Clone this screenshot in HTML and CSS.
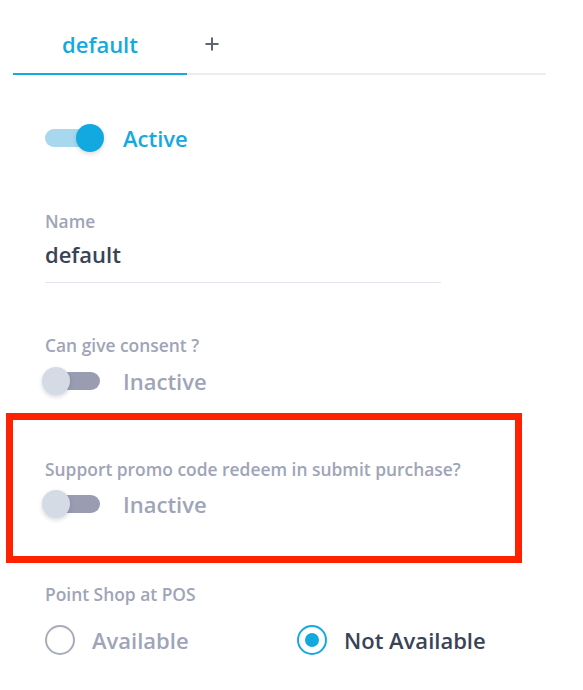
FILE: index.html
```html
<!DOCTYPE html>
<html>
<head>
<meta charset="utf-8">
<link rel="stylesheet" href="styles.css">
</head>
<body>
<div class="page">
  <div class="tabs">
    <div class="tab active">default</div>
    <div class="tab-add">
      <svg width="14" height="14" viewBox="0 0 14 14"><path d="M7 0.5V13.5M0.5 7H13.5" stroke="#5f6479" stroke-width="2" fill="none"/></svg>
    </div>
  </div>

  <div class="field status">
    <div class="switch-row">
      <span class="switch on"><span class="knob"></span></span>
      <span class="switch-text on">Active</span>
    </div>
  </div>

  <div class="field name">
    <div class="label">Name</div>
    <div class="value">default</div>
  </div>

  <div class="field consent">
    <div class="label">Can give consent ?</div>
    <div class="switch-row">
      <span class="switch off"><span class="knob"></span></span>
      <span class="switch-text">Inactive</span>
    </div>
  </div>

  <div class="highlight">
    <div class="label">Support promo code redeem in submit purchase?</div>
    <div class="switch-row">
      <span class="switch off"><span class="knob"></span></span>
      <span class="switch-text">Inactive</span>
    </div>
  </div>

  <div class="field pos">
    <div class="label">Point Shop at POS</div>
    <div class="radios">
      <label class="radio"><span class="circle"></span><span class="radio-text">Available</span></label>
      <label class="radio checked"><span class="circle"></span><span class="radio-text">Not Available</span></label>
    </div>
  </div>
</div>
</body>
</html>
```

FILE: styles.css
```css
html, body {
  margin: 0;
  padding: 0;
  background: #ffffff;
}
body {
  font-family: "Open Sans", "Liberation Sans", sans-serif;
  font-weight: 600;
  color: #3a4356;
}
.page {
  padding: 0 37px 0 13px;
  width: 533px;
}
.tabs {
  display: flex;
  align-items: flex-end;
  border-bottom: 2px solid #e9edf2;
}
.tab {
  width: 174px;
  text-align: center;
  padding: 30px 0 15px;
  line-height: 28px;
  font-size: 22px;
  color: #15a9e0;
  border-bottom: 2px solid #15a9e0;
  margin-bottom: -2px;
}
.tab-add {
  margin-left: 18px;
  height: 14px;
  margin-bottom: 22px;
  display: flex;
}
.field {
  padding-left: 32px;
}
.label {
  font-size: 17.4px;
  line-height: 22px;
  color: #a0a4b7;
}
.switch-row {
  display: flex;
  align-items: center;
  height: 30px;
}
.switch {
  position: relative;
  width: 55px;
  height: 18px;
  border-radius: 9px;
  flex: none;
}
.switch.on { background: #a7d8ee; }
.switch.off { background: #9a9db1; }
.knob {
  position: absolute;
  top: -5px;
  width: 28px;
  height: 28px;
  border-radius: 50%;
  box-shadow: 0 2px 4px rgba(40, 50, 80, 0.18);
}
.switch.on .knob { left: 31px; background: #12a8e0; }
.switch.off .knob { left: -3px; background: #d5dbe5; }
.switch-text {
  margin-left: 23px;
  font-size: 22px;
  line-height: 28px;
  color: #a0a4b7;
  font-weight: 600;
}
.switch-text.on {
  color: #15a9e0;
}
.status {
  margin-top: 48px;
}
.name {
  margin-top: 57px;
}
.name .value {
  margin-top: 8px;
  font-size: 22px;
  line-height: 28px;
  color: #3a4356;
  width: 396px;
  padding-bottom: 14px;
  border-bottom: 1px solid #e3e6ee;
}
.consent {
  margin-top: 51px;
}
.consent .switch-row {
  margin-top: 10px;
}
.highlight {
  margin-top: 17px;
  margin-left: -7px;
  width: 470px;
  border: 7px solid #ff2200;
  padding: 38px 0 37px 32px;
}
.highlight .switch-row {
  margin-top: 9px;
}
.pos {
  margin-top: 20px;
}
.radios {
  margin-top: 20px;
  display: grid;
  grid-template-columns: 252px auto;
}
.radio {
  display: flex;
  align-items: center;
  height: 30px;
}
.circle {
  width: 26px;
  height: 26px;
  border: 2px solid #a9acbd;
  border-radius: 50%;
  flex: none;
  display: flex;
  align-items: center;
  justify-content: center;
}
.radio.checked .circle {
  border-color: #15a9e0;
}
.radio.checked .circle::after {
  content: "";
  width: 14px;
  height: 14px;
  border-radius: 50%;
  background: #12a8e0;
}
.radio-text {
  margin-left: 17px;
  font-size: 22px;
  line-height: 28px;
  color: #a0a4b7;
  font-weight: 600;
}
.radio.checked .radio-text {
  color: #3a4356;
}
```
